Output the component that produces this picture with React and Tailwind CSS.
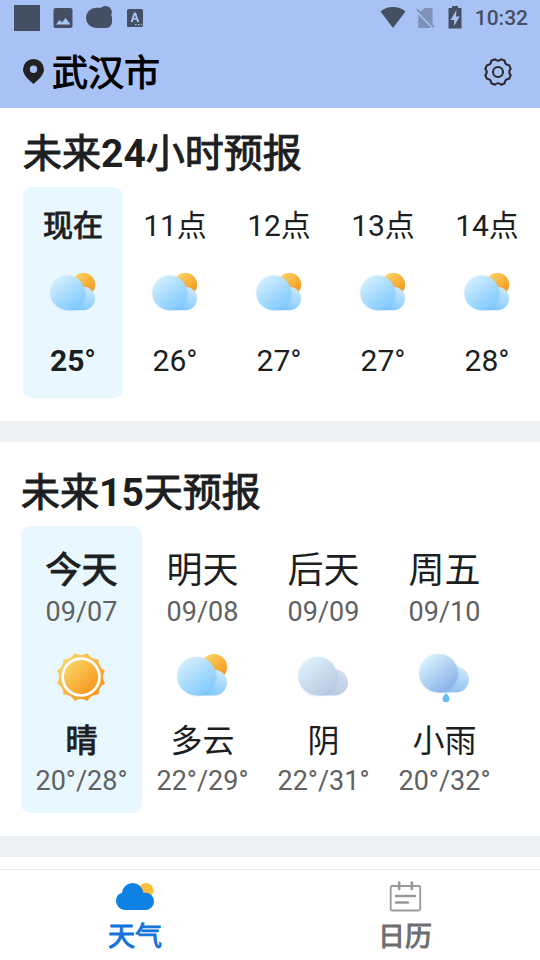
import { useId } from 'react';

function PartlyCloudy({ className, sun = true, tone = 'blue', rain = false }) {
  const id = useId();
  const tones = {
    blue: { big: ['#d3eefd', '#7fc9ff'], small: ['#cfeafd', '#7ec8ff'] },
    grey: { big: ['#dcf1fb', '#bac8e2'], small: ['#d3e0ee', '#b9c9e2'] },
    rain: { big: ['#d8f1fd', '#85b0e6'], small: ['#cdeafd', '#92c0ef'] },
  };
  const { big, small } = tones[tone];
  const lift = rain ? -3 : 0;
  return (
    <svg viewBox="0 0 50 50" className={className} overflow="visible" aria-hidden="true">
      <defs>
        <linearGradient id={id + 's'} x1="0.1" y1="0.1" x2="0.85" y2="0.9">
          <stop offset="0" stopColor="#fbd769" />
          <stop offset="1" stopColor="#f5951a" />
        </linearGradient>
        <linearGradient id={id + 'b'} x1="0.15" y1="0.1" x2="0.8" y2="0.95">
          <stop offset="0" stopColor={big[0]} />
          <stop offset="1" stopColor={big[1]} />
        </linearGradient>
        <linearGradient id={id + 'c'} x1="0.7" y1="0" x2="0.4" y2="1">
          <stop offset="0" stopColor={small[0]} />
          <stop offset="1" stopColor={small[1]} />
        </linearGradient>
        <filter id={id + 'f'} x="-20%" y="-20%" width="140%" height="140%">
          <feDropShadow dx="0.5" dy="0.5" stdDeviation="0.9" floodColor="#5a93c8" floodOpacity="0.22" />
        </filter>
      </defs>
      {sun && <circle cx="36" cy="15" r="13" fill={`url(#${id}s)`} />}
      <g transform={`translate(-1 ${lift})`}>
        <path d="M37 17.5a13 13 0 0 1 0 26H20V30.5h4a13 13 0 0 1 13-13z" fill={`url(#${id}c)`} />
        <circle cx="19.5" cy="24.2" r="19.3" fill={`url(#${id}b)`} filter={`url(#${id}f)`} />
      </g>
      {rain && (
        <path d="M26 41c1.8 2.2 3.5 4 3.5 5.9a3.5 3.3 0 0 1-7 0c0-1.9 1.7-3.7 3.5-5.9z" fill="#69bff2" />
      )}
    </svg>
  );
}

const sunPoints = Array.from({ length: 24 }, (_, i) => {
  const angle = (i * Math.PI) / 12 + Math.PI / 12;
  const radius = i % 2 === 0 ? 24.8 : 20;
  return [24 + radius * Math.cos(angle), 25 + radius * Math.sin(angle)];
});
const sunPath =
  sunPoints
    .map(([x, y], i) => {
      if (i === 0) return `M${x} ${y}`;
      return i % 2 === 0 ? `${x} ${y}` : `Q${x} ${y} `;
    })
    .join('') + `${sunPoints[0][0]} ${sunPoints[0][1]}Z`;

function Sunny({ className }) {
  return (
    <svg viewBox="0 0 50 50" className={className} aria-hidden="true">
      <defs>
        <linearGradient id="sunny" x1="0.1" y1="0.1" x2="0.85" y2="0.9">
          <stop offset="0" stopColor="#fbd769" />
          <stop offset="1" stopColor="#f5951a" />
        </linearGradient>
      </defs>
      <path d={sunPath} fill="url(#sunny)" />
      <circle cx="24" cy="25" r="18.4" fill="url(#sunny)" stroke="#fff" strokeWidth="2.8" />
    </svg>
  );
}

function StatusBar() {
  return (
    <div className="flex h-9 items-center justify-between pr-3 pl-3.5 text-[#454f63]">
      <svg viewBox="0 0 132 28" className="h-7 w-[132px]" fill="currentColor" aria-hidden="true">
        <rect x="0" y="1" width="26" height="26" />
        <path
          fillRule="evenodd"
          d="M41.500 4h15a2 2 0 0 1 2 2v16a2 2 0 0 1-2 2h-15a2 2 0 0 1-2-2V6a2 2 0 0 1 2-2zM42 20.500h14.500l-5-6.500-3.500 4.500-2.500-2.500z"
        />
        <rect x="72" y="3.800" width="24" height="20.200" rx="10" />
        <circle cx="91.500" cy="8.300" r="6.300" />
        <rect x="82" y="8" width="16" height="16" rx="6" />
        <path fillRule="evenodd" d="M114.500 5h13a1.500 1.500 0 0 1 1.500 1.500v15a1.500 1.500 0 0 1-1.500 1.500h-13a1.500 1.500 0 0 1-1.500-1.500v-15a1.500 1.500 0 0 1 1.500-1.500zM119.800 8.500L116.600 18h2.200l.6-2.200h3l.6 2.200h2.200L122 8.500zM120.900 11l1 3h-2zM121 20v1.300h1.600V20zM124 20v1.300h1.600V20zM127 20v1.300h1V20z" />
      </svg>
      <div className="flex items-center gap-3">
        <svg viewBox="0 0 84 28" className="h-7 w-[84px]" fill="currentColor" aria-hidden="true">
          <path d="M1.500 7.500a20 20 0 0 1 25 0L14 24z" />
          <g opacity="0.42">
            <path d="M45.500 4H52a1.600 1.600 0 0 1 1.600 1.600v15L41.500 8zM39.200 10.500 52 23.500a2 2 0 0 1-1.500.6H40.800a1.600 1.600 0 0 1-1.600-1.600z" />
            <path d="m37.200 5.900 1.300-1.300L55.700 22.500l-1.300 1.400z" />
          </g>
          <path fillRule="evenodd" d="M73 2h6v2h3.500v20.500H69.500V4H73zm4.500 4-6 10h3.700v6l5.400-9.600H77z" />
        </svg>
        <time className="text-[21px] leading-7 font-medium">10:32</time>
      </div>
    </div>
  );
}

function Header() {
  return (
    <header className="bg-[#a9c2f6]">
      <StatusBar />
      <div className="flex h-[72px] items-center justify-between px-[22px]">
        <button type="button" className="flex items-center gap-2 text-black">
          <svg viewBox="0 0 22 26" className="h-[26px] w-[22px]" aria-hidden="true">
            <path
              fillRule="evenodd"
              d="M11.500 0a10.500 10.500 0 0 1 10.500 10.500c0 5-5 10-10.500 14.500C6 20.500 1 15.500 1 10.500A10.500 10.500 0 0 1 11.500 0zm0 6.600a3.700 3.700 0 1 0 0 7.400 3.700 3.700 0 0 0 0-7.400z"
              fill="#222"
            />
          </svg>
          <span className="pt-1 text-[36px] leading-[48px] [-webkit-text-stroke:1px]">武汉市</span>
        </button>
        <button type="button" aria-label="设置" className="flex size-10 items-center justify-center">
          <svg viewBox="0 0 28 28" className="size-7" fill="none" stroke="#2b2b2b" strokeWidth="2.1" strokeLinejoin="round" aria-hidden="true">
            <path d="M10.800 1.300Q14 4.200 17.200 1.300L20.700 2.800Q20.900 7.100 25.200 7.300L26.700 10.800Q23.800 14 26.700 17.200L25.200 20.700Q20.900 20.900 20.700 25.200L17.200 26.700Q14 23.800 10.800 26.700L7.300 25.200Q7.100 20.900 2.800 20.700L1.300 17.200Q4.200 14 1.300 10.800L2.800 7.300Q7.100 7.100 7.300 2.800Z" />
            <circle cx="14" cy="14" r="5" />
          </svg>
        </button>
      </div>
    </header>
  );
}

const hours = [
  { label: '现在', temp: '25°' },
  { label: '11点', temp: '26°' },
  { label: '12点', temp: '27°' },
  { label: '13点', temp: '27°' },
  { label: '14点', temp: '28°' },
];

const days = [
  { name: '今天', date: '09/07', icon: <Sunny className="size-[50px]" />, text: '晴', range: '20°/28°' },
  { name: '明天', date: '09/08', icon: <PartlyCloudy className="size-[50px]" />, text: '多云', range: '22°/29°' },
  { name: '后天', date: '09/09', icon: <PartlyCloudy className="size-[50px]" sun={false} tone="grey" />, text: '阴', range: '22°/31°' },
  { name: '周五', date: '09/10', icon: <PartlyCloudy className="size-[50px]" sun={false} tone="rain" rain />, text: '小雨', range: '20°/32°' },
];

function SectionTitle({ before, count, after }) {
  return (
    <h2 className="text-[39px] leading-[48px] [-webkit-text-stroke:1px]">
      {before}
      <span className="font-bold [-webkit-text-stroke:0px]">{count}</span>
      {after}
    </h2>
  );
}

function Hourly() {
  return (
    <section className="overflow-hidden bg-white pt-[22px] pb-[23px] pl-[23px]">
      <SectionTitle before="未来" count="24" after="小时预报" />
      <ul className="mt-[9px] flex text-[30px] leading-9">
        {hours.map((hour, i) => (
          <li
            key={hour.label}
            className={
              i === 0
                ? 'flex w-[100px] shrink-0 flex-col items-center rounded-[9px] bg-[#e9f8ff] pt-[21px] pb-[19px]'
                : 'flex w-[104px] shrink-0 flex-col items-center pt-[21px] pb-[19px]'
            }
          >
            <span className={i === 0 ? '[-webkit-text-stroke:1px]' : ''}>{hour.label}</span>
            <PartlyCloudy className="my-[27px] size-[45px]" />
            <span className={i === 0 ? 'font-bold' : ''}>{hour.temp}</span>
          </li>
        ))}
      </ul>
    </section>
  );
}

function Daily() {
  return (
    <section className="overflow-hidden bg-white pt-[27px] pb-[23px] pl-[21px]">
      <SectionTitle before="未来" count="15" after="天预报" />
      <ul className="mt-[9px] flex">
        {days.map((day, i) => (
          <li
            key={day.date}
            className={
              i === 0
                ? 'flex w-[121px] shrink-0 flex-col items-center rounded-[9px] bg-[#e9f8ff] pt-[23px] pb-[14px]'
                : 'flex w-[121px] shrink-0 flex-col items-center pt-[23px] pb-[14px]'
            }
          >
            <span className={i === 0 ? 'text-[36px] leading-[44px] [-webkit-text-stroke:1px]' : 'text-[36px] leading-[44px]'}>
              {day.name}
            </span>
            <span className="mt-px text-[27px] leading-9 text-[#5f6163]">{day.date}</span>
            <div className="mt-[22px] mb-[17px]">{day.icon}</div>
            <span className={i === 0 ? 'text-[32px] leading-[44px] [-webkit-text-stroke:1px]' : 'text-[32px] leading-[44px]'}>
              {day.text}
            </span>
            <span className="text-[27px] leading-9 text-[#5f6163]">{day.range}</span>
          </li>
        ))}
      </ul>
    </section>
  );
}

function TabBar() {
  return (
    <nav className="grid grid-cols-2 border-t border-[#ededed] bg-white text-[27px] leading-9 [-webkit-text-stroke:1px]">
      <a href="#weather" aria-current="page" className="flex flex-col items-center gap-[7px] pt-2.5 pb-[5px] text-[#1472dc]">
        <svg viewBox="0 0 40 32" className="h-8 w-10" aria-hidden="true">
          <circle cx="31" cy="10.500" r="7.500" fill="#ffbd3c" />
          <path
            d="M10 30a9 9 0 0 1-9-9 8.600 8.600 0 0 1 6-8.300 10.700 10.700 0 0 1 21.300 0h2.200a8.600 8.600 0 0 1 8.500 8.600 8.700 8.700 0 0 1-8.700 8.700z"
            fill="#0d82e4"
          />
        </svg>
        天气
      </a>
      <a href="#calendar" className="flex flex-col items-center gap-[7px] pt-2.5 pb-[5px] text-[#6c6e70]">
        <svg viewBox="0 0 40 32" className="h-8 w-10" fill="none" stroke="#999" aria-hidden="true">
          <rect x="5.700" y="6" width="29.500" height="24.500" rx="1.500" strokeWidth="1.800" />
          <path d="M14.200 2.500v6.500M26.800 2.500v6.500" strokeWidth="2.600" strokeLinecap="round" />
          <path d="M11 16h19M11 22.500h12" strokeWidth="2.400" strokeLinecap="round" />
        </svg>
        日历
      </a>
    </nav>
  );
}

export default function App() {
  return (
    <div className="flex h-screen flex-col bg-[#edf1f4] font-[Roboto,'Noto_Sans_CJK_SC',sans-serif] text-[#1c1e1f]">
      <Header />
      <main className="flex min-h-0 flex-1 flex-col gap-[21px] overflow-hidden">
        <div className="shrink-0">
          <Hourly />
        </div>
        <div className="shrink-0">
          <Daily />
        </div>
        <section className="flex-1 bg-white" />
      </main>
      <TabBar />
    </div>
  );
}
